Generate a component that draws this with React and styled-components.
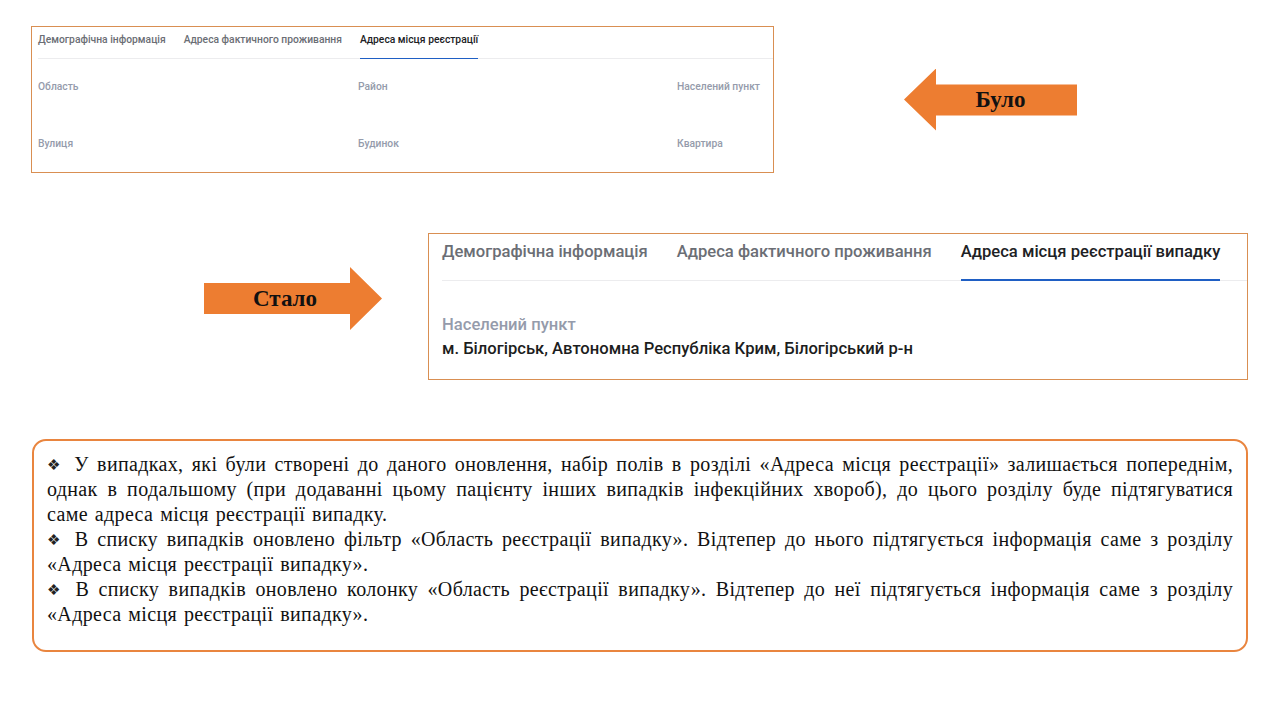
import React from 'react';
import styled, { createGlobalStyle } from 'styled-components';

const GlobalStyle = createGlobalStyle`
    html, body {
        margin: 0;
        padding: 0;
        background: #ffffff;
    }
`;

const Slide = styled.div`
    width: 1280px;
    height: 720px;
    display: flex;
    flex-direction: column;
    background: #ffffff;
    overflow: hidden;
`;

const Row = styled.div`
    display: flex;
    align-items: ${({ align }) => align || 'center'};
    margin-top: ${({ top }) => top}px;
    padding-left: ${({ left }) => left}px;
`;

const Card = styled.div`
    box-sizing: border-box;
    width: ${({ w }) => w}px;
    height: ${({ h }) => h}px;
    margin-left: ${({ ml }) => ml || 0}px;
    border: 1px solid #d98f52;
    background: #fff;
    padding-left: ${({ pad }) => pad}px;
    font-family: Roboto, 'Noto Sans', sans-serif;
    display: flex;
    flex-direction: column;
`;

const Tabs = styled.div`
    display: flex;
    gap: ${({ gap }) => gap}px;
    border-bottom: 1px solid #ececee;
    padding-top: ${({ top }) => top}px;
`;

const Tab = styled.div`
    font-size: ${({ size }) => size}px;
    line-height: ${({ lh }) => lh}px;
    font-weight: 500;
    white-space: nowrap;
    color: ${({ active }) => (active ? '#202124' : '#6b6e75')};
    padding-bottom: ${({ pb }) => pb}px;
    border-bottom: ${({ line }) => line}px solid
        ${({ active }) => (active ? '#1f5fc4' : 'transparent')};
    margin-bottom: -1px;
`;

const FieldGrid = styled.div`
    display: grid;
    grid-template-columns: 320px 319px auto;
    row-gap: 45px;
    padding-top: 22px;
`;

const Label = styled.div`
    font-size: ${({ size }) => size}px;
    line-height: ${({ lh }) => lh}px;
    font-weight: 500;
    color: #959bab;
    white-space: nowrap;
`;

const Value = styled.div`
    font-size: 16.6px;
    line-height: 24px;
    font-weight: 500;
    color: #1c1d20;
    white-space: nowrap;
`;

const Field = styled.div`
    padding-top: ${({ top }) => top}px;
`;

const Arrow = styled.div`
    box-sizing: border-box;
    width: ${({ w }) => w}px;
    height: ${({ h }) => h}px;
    margin-left: ${({ ml }) => ml || 0}px;
    margin-top: ${({ mt }) => mt || 0}px;
    background: #ed7d31;
    display: flex;
    align-items: center;
    justify-content: center;
    font-family: 'Liberation Serif', 'Times New Roman', serif;
    font-weight: bold;
    font-size: 23px;
    color: #111;
    clip-path: ${({ dir }) =>
        dir === 'left'
            ? 'polygon(0 50%, 32px 0, 32px 16px, 100% 16px, 100% 47px, 32px 47px, 32px 100%)'
            : 'polygon(0 16px, 146px 16px, 146px 0, 100% 50%, 146px 100%, 146px 47px, 0 47px)'};
    padding-left: ${({ dir }) => (dir === 'left' ? 20 : 0)}px;
    padding-right: ${({ dir }) => (dir === 'left' ? 0 : 16)}px;
`;

const Notes = styled.div`
    box-sizing: border-box;
    width: 1216px;
    height: 213px;
    margin-left: 32px;
    border: 2px solid #e9853f;
    border-radius: 14px;
    padding: 11px 13px 0 13px;
    font-family: 'Liberation Serif', 'Times New Roman', serif;
    font-size: 20px;
    line-height: 25px;
    letter-spacing: 0.35px;
    word-spacing: 1.5px;
    color: #111;
    text-align: justify;

    p {
        margin: 0;
    }

    /* diamond bullet in front of every paragraph */
    p::before {
        content: '❖';
        font-family: 'DejaVu Sans', sans-serif;
        font-size: 15px;
        line-height: 1;
        color: #222;
        vertical-align: 1px;
        margin-right: 12px;
    }
`;

const oldTabs = ['Демографічна інформація', 'Адреса фактичного проживання', 'Адреса місця реєстрації'];
const newTabs = ['Демографічна інформація', 'Адреса фактичного проживання', 'Адреса місця реєстрації випадку'];
const oldFields = ['Область', 'Район', 'Населений пункт', 'Вулиця', 'Будинок', 'Квартира'];

const notes = [
    'У випадках, які були створені до даного оновлення, набір полів в розділі «Адреса місця реєстрації» залишається попереднім, однак в подальшому (при додаванні цьому пацієнту інших випадків інфекційних хвороб), до цього розділу буде підтягуватися саме адреса місця реєстрації випадку.',
    'В списку випадків оновлено фільтр «Область реєстрації випадку». Відтепер до нього підтягується інформація саме з розділу «Адреса місця реєстрації випадку».',
    'В списку випадків оновлено колонку «Область реєстрації випадку». Відтепер до неї підтягується інформація саме з розділу «Адреса місця реєстрації випадку».',
];

const App = () => (
    <Slide>
        <GlobalStyle />
        <Row top={26} left={31}>
            <Card w={743} h={147} pad={6}>
                <Tabs gap={18} top={6}>
                    {oldTabs.map((t, i) => (
                        <Tab key={t} size={10.3} lh={14} pb={11} line={1.5} active={i === 2}>
                            {t}
                        </Tab>
                    ))}
                </Tabs>
                <FieldGrid>
                    {oldFields.map((f) => (
                        <Label key={f} size={10.3} lh={12}>
                            {f}
                        </Label>
                    ))}
                </FieldGrid>
            </Card>
            <Arrow dir="left" w={173} h={62} ml={130}>
                Було
            </Arrow>
        </Row>
        <Row top={60} left={204} align="flex-start">
            <Arrow dir="right" w={178} h={63} mt={34}>
                Стало
            </Arrow>
            <Card w={820} h={147} ml={46} pad={13}>
                <Tabs gap={29} top={7}>
                    {newTabs.map((t, i) => (
                        <Tab key={t} size={16.6} lh={22} pb={16} line={2} active={i === 2}>
                            {t}
                        </Tab>
                    ))}
                </Tabs>
                <Field top={32}>
                    <Label size={16.6} lh={24}>
                        Населений пункт
                    </Label>
                    <Value>м. Білогірськ, Автономна Республіка Крим, Білогірський р-н</Value>
                </Field>
            </Card>
        </Row>
        <Row top={59} left={0}>
            <Notes>
                {notes.map((n) => (
                    <p key={n.slice(0, 20)}>{n}</p>
                ))}
            </Notes>
        </Row>
    </Slide>
);

export default App;
